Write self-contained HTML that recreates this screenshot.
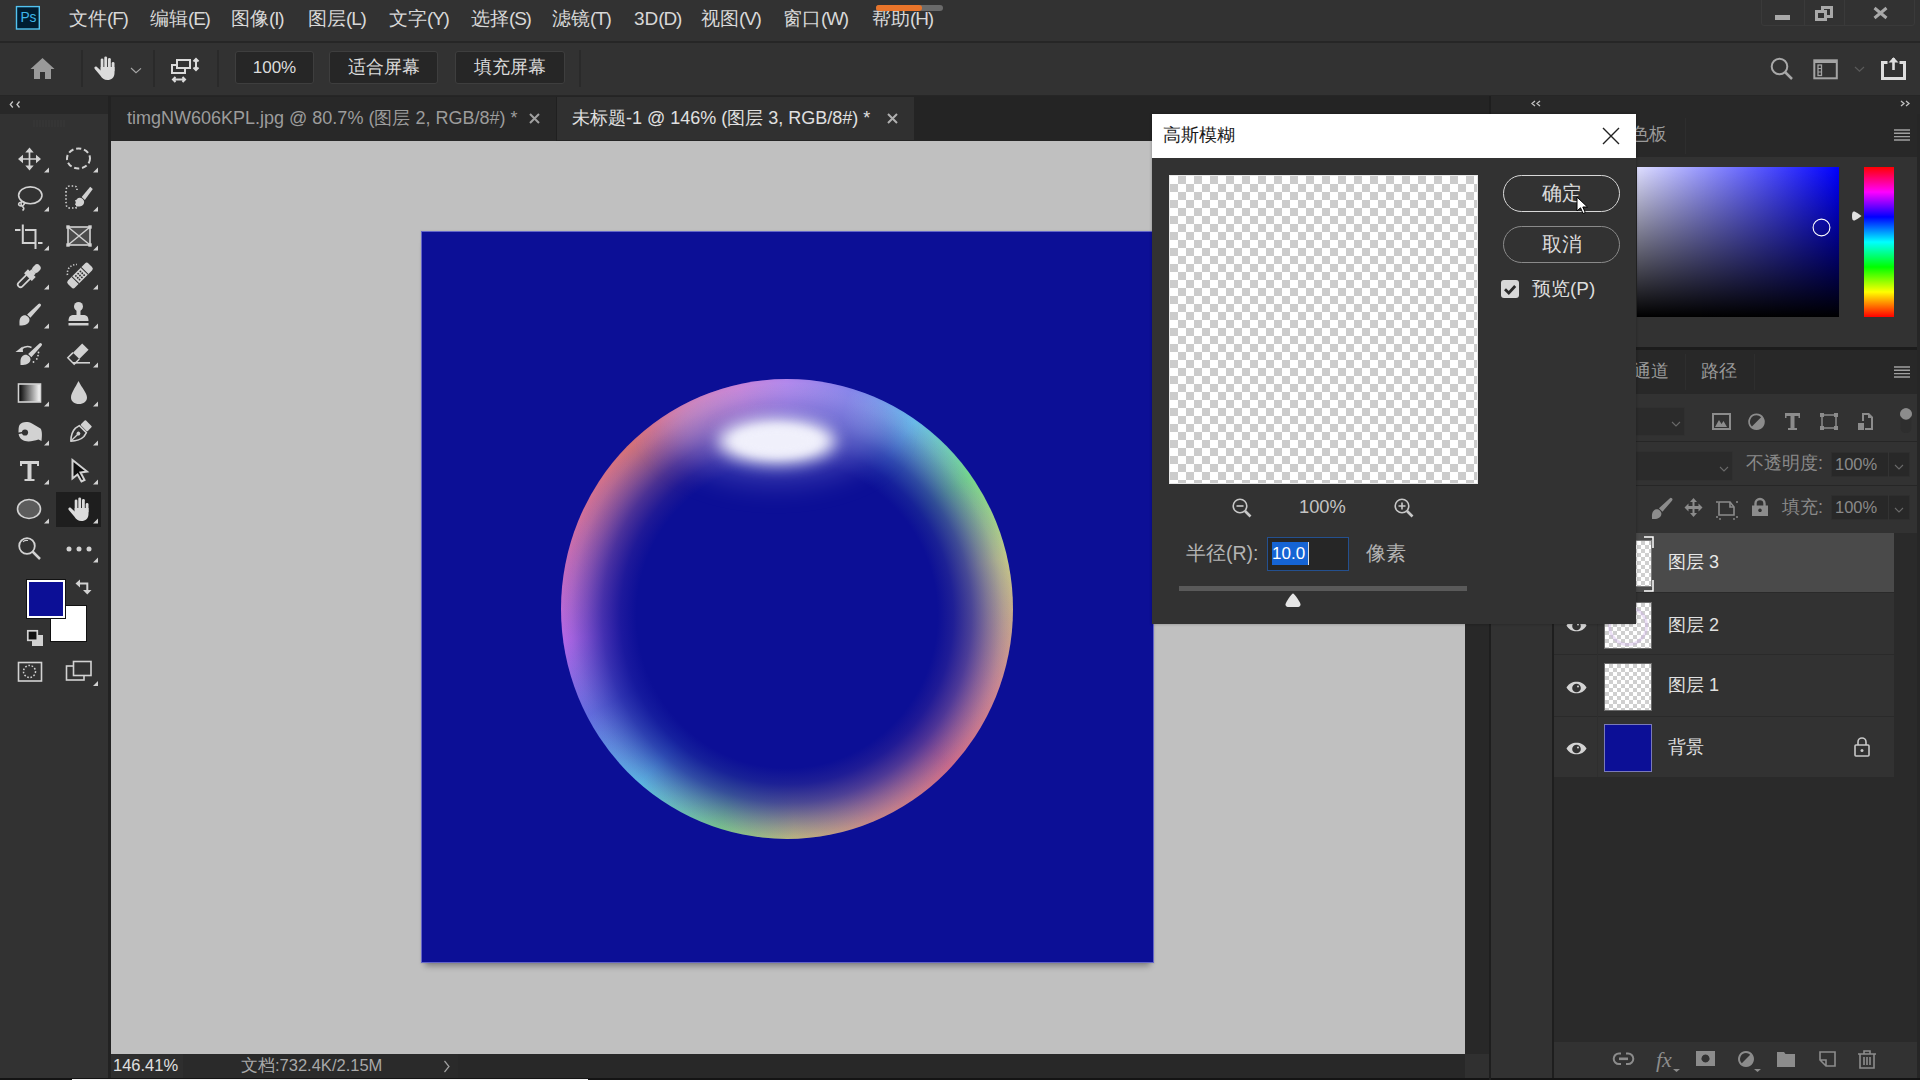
<!DOCTYPE html>
<html><head><meta charset="utf-8">
<style>
*{margin:0;padding:0;box-sizing:border-box}
html,body{width:1920px;height:1080px;overflow:hidden;background:#323232;font-family:"Liberation Sans",sans-serif;color:#d4d4d4}
.a{position:absolute}
svg{position:absolute;overflow:visible}
</style></head><body>

<!-- MENU BAR -->
<div class="a" id="menubar" style="left:0;top:0;width:1920px;height:41px;background:#323232"></div>
<div class="a" style="left:0;top:41px;width:1920px;height:2px;background:#262626"></div>


<!-- PS logo -->
<svg style="left:0;top:0" width="60" height="40"><rect x="16.5" y="6.6" width="22.8" height="22.4" fill="#001c30" stroke="#52c2f0" stroke-width="1.4"/><text x="20.6" y="22.2" font-family="Liberation Sans" font-size="13.8" fill="#3db6ea" letter-spacing="-0.3">Ps</text></svg>
<div class="a" id="menus" style="left:0;top:0;height:41px;font-size:19px;line-height:37px;color:#d8d8d8;white-space:nowrap">
<span class="a" style="left:69px">文件<i style="font-style:normal;letter-spacing:-1.2px">(F)</i></span>
<span class="a" style="left:150px">编辑<i style="font-style:normal;letter-spacing:-1.2px">(E)</i></span>
<span class="a" style="left:231px">图像<i style="font-style:normal;letter-spacing:-1.2px">(I)</i></span>
<span class="a" style="left:308px">图层<i style="font-style:normal;letter-spacing:-1.2px">(L)</i></span>
<span class="a" style="left:389px">文字<i style="font-style:normal;letter-spacing:-1.2px">(Y)</i></span>
<span class="a" style="left:471px">选择<i style="font-style:normal;letter-spacing:-1.2px">(S)</i></span>
<span class="a" style="left:552px">滤镜<i style="font-style:normal;letter-spacing:-1.2px">(T)</i></span>
<span class="a" style="left:634px">3D<i style="font-style:normal;letter-spacing:-1.2px">(D)</i></span>
<span class="a" style="left:701px">视图<i style="font-style:normal;letter-spacing:-1.2px">(V)</i></span>
<span class="a" style="left:783px">窗口<i style="font-style:normal;letter-spacing:-1.2px">(W)</i></span>
<span class="a" style="left:872px">帮助<i style="font-style:normal;letter-spacing:-1.2px">(H)</i></span>
</div>
<div class="a" style="left:876px;top:5px;width:67px;height:6px;border-radius:3px;background:#6a6a6a"></div>
<div class="a" style="left:876px;top:5px;width:46px;height:6px;border-radius:3px;background:#e8742a"></div>
<!-- window controls -->
<div class="a" style="left:1761px;top:-3px;width:154px;height:29px;border:1px solid #3a3a3a;border-radius:3px"></div>
<div class="a" style="left:1804px;top:0;width:1px;height:25px;background:#3a3a3a"></div>
<div class="a" style="left:1844px;top:0;width:1px;height:25px;background:#3a3a3a"></div>
<div class="a" style="left:1775px;top:15px;width:15px;height:5px;background:#a8a8a8"></div>
<div class="a" style="left:1821px;top:6px;width:12px;height:12px;border:3px solid #a8a8a8"></div>
<div class="a" style="left:1815px;top:10px;width:12px;height:11px;border:3px solid #a8a8a8;background:#323232"></div>
<svg style="left:1873px;top:7px" width="15" height="12"><path d="M1.5 1 L13.5 11 M13.5 1 L1.5 11" stroke="#a8a8a8" stroke-width="3"/></svg>

<!-- OPTIONS BAR -->
<div class="a" id="optbar" style="left:0;top:43px;width:1920px;height:52px;background:#323232"></div>
<div class="a" style="left:0;top:95px;width:1920px;height:1px;background:#262626"></div>


<!-- options bar content -->
<svg style="left:30px;top:57px" width="25" height="23"><path d="M12.5 1 L0.5 12 H4 V22 H10 V15 H15 V22 H21 V12 H24.5 Z" fill="#9a9a9a"/></svg>
<div class="a" style="left:81px;top:50px;width:2px;height:37px;background:#2a2a2a"></div>
<div class="a" style="left:153px;top:50px;width:2px;height:37px;background:#2a2a2a"></div>
<div class="a" style="left:217px;top:50px;width:2px;height:37px;background:#2a2a2a"></div>
<div class="a" style="left:579px;top:50px;width:2px;height:37px;background:#2a2a2a"></div>
<svg style="left:88px;top:52px" width="30" height="30"><g fill="#dcdcdc"><rect x="12.7" y="6.5" width="2.7" height="12" rx="1.35"/><rect x="16.3" y="4.4" width="2.8" height="14" rx="1.4"/><rect x="20" y="5.9" width="2.8" height="12" rx="1.4"/><rect x="23.7" y="10" width="2.8" height="10" rx="1.4"/><path d="M12.7 15 H26.5 V21 C26.5 25.5 23.5 28 19.5 28 C16 28 14 26.2 12.5 23.8 L6.8 17 C5.6 15.5 7.2 13.8 8.7 14.8 L12.7 18.5 Z"/></g></svg>
<svg style="left:130px;top:67px" width="12" height="7"><path d="M1 1 L6 5.7 L11 1.3" stroke="#a8a8a8" stroke-width="1.1" fill="none"/></svg>
<svg style="left:171px;top:57px" width="28" height="25"><g stroke="#dadada" stroke-width="2" fill="none"><rect x="1" y="8" width="13" height="8"/><rect x="6" y="3" width="13" height="8" fill="#323232"/><path d="M25 2 V13 M22.5 4.5 L25 2 L27.5 4.5 M22.5 10.5 L25 13 L27.5 10.5 M2 22.5 H14 M4.5 20 L2 22.5 L4.5 25 M11.5 20 L14 22.5 L11.5 25"/></g></svg>
<div class="a" style="left:235px;top:51px;width:79px;height:33px;border:1px solid #3e3e3e;border-radius:3px;background:#262626;color:#dcdcdc;font-size:17px;line-height:31px;text-align:center">100%</div>
<div class="a" style="left:329px;top:51px;width:109px;height:33px;border:1px solid #3e3e3e;border-radius:3px;background:#262626;color:#dcdcdc;font-size:18px;line-height:31px;text-align:center">适合屏幕</div>
<div class="a" style="left:455px;top:51px;width:110px;height:33px;border:1px solid #3e3e3e;border-radius:3px;background:#262626;color:#dcdcdc;font-size:18px;line-height:31px;text-align:center">填充屏幕</div>
<!-- right options -->
<svg style="left:1770px;top:57px" width="24" height="24"><circle cx="9.5" cy="9.5" r="7.8" stroke="#a8a8a8" stroke-width="2" fill="none"/><path d="M15 15 L22 22" stroke="#a8a8a8" stroke-width="2.5"/></svg>
<svg style="left:1813px;top:59px" width="26" height="21"><rect x="1.3" y="1.3" width="22.5" height="18" stroke="#a4a4a4" stroke-width="2" fill="none"/><path d="M1.3 2.5 H23.8" stroke="#a4a4a4" stroke-width="3"/><rect x="5" y="6" width="3.5" height="10.5" stroke="#a4a4a4" stroke-width="1.3" fill="none"/><path d="M5 9.5 H8.5 M5 13 H8.5" stroke="#a4a4a4" stroke-width="1.2"/></svg>
<svg style="left:1854px;top:66px" width="11" height="7"><path d="M1 1 L5.5 5.2 L10 1" stroke="#5a5a5a" stroke-width="1.2" fill="none"/></svg>
<svg style="left:1880px;top:54px" width="27" height="27"><path d="M13.5 4 V16" stroke="#dedede" stroke-width="2.6"/><path d="M8.5 8.5 L13.5 3.2 L18.5 8.5 Z" fill="#dedede"/><path d="M7.5 8.5 H2.5 V24.5 H24.5 V8.5 H19.5" stroke="#dedede" stroke-width="3" fill="none"/></svg>

<!-- TOOLBAR -->
<div class="a" style="left:0;top:96px;width:108px;height:18px;background:#282828"></div>
<div class="a" style="left:0;top:114px;width:108px;height:966px;background:#323232"></div>
<div class="a" style="left:108px;top:96px;width:3px;height:984px;background:#222222"></div>


<!-- toolbar content -->
<svg style="left:0;top:0" width="108" height="1080">
<g fill="none" stroke="#c8c8c8" stroke-width="1.3"><path d="M12.8 101.5 L10.3 104.5 L12.8 107.5 M19.5 101.5 L17 104.5 L19.5 107.5"/></g>
<g stroke="#383838" stroke-width="1"><path d="M34 120 V127 M37 120 V127 M40 120 V127 M43 120 V127 M46 120 V127 M49 120 V127 M52 120 V127 M55 120 V127 M58 120 V127 M61 120 V127 M64 120 V127"/></g>
<g fill="#d2d2d2"><path d="M44 172.5 H49 V167.5 Z"/><path d="M93 172.5 H98 V167.5 Z"/><path d="M44 211.5 H49 V206.5 Z"/><path d="M93 211.5 H98 V206.5 Z"/><path d="M44 250.5 H49 V245.5 Z"/><path d="M93 250.5 H98 V245.5 Z"/><path d="M44 289.5 H49 V284.5 Z"/><path d="M93 289.5 H98 V284.5 Z"/><path d="M44 328.5 H49 V323.5 Z"/><path d="M93 328.5 H98 V323.5 Z"/><path d="M44 367.5 H49 V362.5 Z"/><path d="M93 367.5 H98 V362.5 Z"/><path d="M44 406.5 H49 V401.5 Z"/><path d="M93 406.5 H98 V401.5 Z"/><path d="M44 445.5 H49 V440.5 Z"/><path d="M93 445.5 H98 V440.5 Z"/><path d="M44 484.5 H49 V479.5 Z"/><path d="M93 484.5 H98 V479.5 Z"/><path d="M44 523.5 H49 V518.5 Z"/><path d="M93 523.5 H98 V518.5 Z"/><path d="M93 562.5 H98 V557.5 Z"/><path d="M93 686 H98 V681 Z"/></g>
<!-- move -->
<path d="M29.5 151 V167 M21.5 159 H37.5" stroke="#d2d2d2" stroke-width="1.7"/>
<path fill="#d2d2d2" d="M29.5 147.5 L25.3 152.5 H33.7 Z M29.5 170.5 L25.3 165.5 H33.7 Z M18 159 L23 154.8 V163.2 Z M41 159 L36 154.8 V163.2 Z"/>
<!-- ellipse marquee -->
<ellipse cx="78.5" cy="158.5" rx="11.5" ry="10" fill="none" stroke="#d2d2d2" stroke-width="2" stroke-dasharray="5.2 2.8"/>
<!-- lasso -->
<g fill="none" stroke="#d2d2d2" stroke-width="1.6">
<ellipse cx="30.3" cy="195.3" rx="11.7" ry="8.4"/>
<path d="M22 202.5 C18 201.5 17.5 206 21 206 C24 206 25.5 203 23 201.8 C21 201 20 204.5 22.5 206.5 C24.5 208 24 209.5 22.5 210.5"/>
</g>
<!-- quick selection -->
<g fill="none" stroke="#d2d2d2" stroke-width="1.6" stroke-dasharray="1.5 2"><path d="M76 200 V208 H70 C66 208 66 205 66 200 V192 C66 188 67 186 70 186 H74 C77 186 77 188 77 190"/></g>
<g transform="translate(76 206.5) rotate(-48) scale(0.82)" fill="#d2d2d2"><path d="M0 0 C1.5 -1 3.5 -5.2 7.5 -5.2 C10.5 -5.2 12.2 -2.8 12.2 0 C12.2 2.8 10.3 5 7.5 5 C3.5 5 1.5 1 0 0 Z"/><path d="M13.2 -2.6 L29.5 -3.2 L29.5 1 L13.2 2.6 Z"/></g>
<!-- crop -->
<g fill="none" stroke="#d2d2d2" stroke-width="2"><path d="M15 230 H20.5 M22.8 224.5 V243 H35.5 M25 230 H35.5 V249 M38 243 H42.5"/></g>
<!-- frame -->
<rect x="68" y="227" width="22" height="18" fill="#4c4c4c" stroke="#d2d2d2" stroke-width="1.6"/>
<path d="M68 227 L90 245 M90 227 L68 245" stroke="#d2d2d2" stroke-width="1.5"/>
<g fill="#d2d2d2"><rect x="66.3" y="225.3" width="3.4" height="3.4"/><rect x="88.3" y="225.3" width="3.4" height="3.4"/><rect x="66.3" y="243.3" width="3.4" height="3.4"/><rect x="88.3" y="243.3" width="3.4" height="3.4"/></g>
<!-- eyedropper -->
<g transform="translate(29 276) rotate(-45)" fill="#d2d2d2">
<path d="M-1 -2.7 H-12 A2.7 2.7 0 0 0 -12 2.7 H-1" fill="none" stroke="#d2d2d2" stroke-width="1.7"/>
<rect x="-1.5" y="-5.5" width="5.5" height="11"/><rect x="3.5" y="-3" width="3" height="6"/><rect x="6" y="-3.6" width="9" height="7.2" rx="3.6"/>
</g>
<!-- healing -->
<g transform="translate(80 275.5) rotate(-45)"><rect x="-14.5" y="-5" width="29" height="10" rx="2.5" fill="#d2d2d2"/><path d="M-6.5 -5 V5 M6.5 -5 V5" stroke="#323232" stroke-width="1"/><g fill="#323232"><circle cx="-3.2" cy="-2.6" r="0.95"/><circle cx="0" cy="-2.6" r="0.95"/><circle cx="3.2" cy="-2.6" r="0.95"/><circle cx="-3.2" cy="0" r="0.95"/><circle cx="0" cy="0" r="0.95"/><circle cx="3.2" cy="0" r="0.95"/><circle cx="-3.2" cy="2.6" r="0.95"/><circle cx="0" cy="2.6" r="0.95"/><circle cx="3.2" cy="2.6" r="0.95"/></g></g>
<path d="M67.5 275 C66.5 269 70.5 264.5 77 264.5" fill="none" stroke="#d2d2d2" stroke-width="1.6" stroke-dasharray="1.3 1.8"/>
<!-- brush -->
<g transform="translate(19.5 325.5) rotate(-45.5)" fill="#d2d2d2"><path d="M0 0 C1.5 -1 3.5 -4.8 7.5 -4.8 C10.5 -4.8 12.2 -2.8 12.2 0 C12.2 2.8 10.3 4.6 7.5 4.6 C3.5 4.6 1.5 1 0 0 Z"/><path d="M13.2 -2.3 L28.5 -1.5 A1.5 1.5 0 0 1 28.5 1.5 L13.2 2.3 Z"/></g>
<!-- stamp -->
<circle cx="78.5" cy="306.5" r="4.5" fill="#d2d2d2"/><rect x="76.5" y="309" width="4" height="7" fill="#d2d2d2"/><path d="M68.5 321 C68.5 316.5 70.5 315 74 315 H83 C86.5 315 88.5 316.5 88.5 321 Z" fill="#d2d2d2"/><rect x="68.5" y="323" width="20" height="2.5" fill="#d2d2d2"/>
<!-- history brush -->
<g transform="translate(20.5 365) rotate(-45.5)" fill="#d2d2d2"><path d="M0 0 C1.5 -1 3.5 -4.8 7.5 -4.8 C10.5 -4.8 12.2 -2.8 12.2 0 C12.2 2.8 10.3 4.6 7.5 4.6 C3.5 4.6 1.5 1 0 0 Z"/><path d="M13.2 -2.3 L28.5 -1.5 A1.5 1.5 0 0 1 28.5 1.5 L13.2 2.3 Z"/></g>
<path d="M15.5 352 L22.5 346.5 L23 352 Z" fill="#d2d2d2"/><path d="M21 349.5 C24 346.5 28 346 31.5 347.5" fill="none" stroke="#d2d2d2" stroke-width="1.5"/>
<g fill="#d2d2d2"><circle cx="38.5" cy="352.5" r="0.9"/><circle cx="38" cy="355.6" r="0.9"/><circle cx="36.8" cy="358.9" r="0.9"/><circle cx="33.5" cy="362" r="0.9"/></g>
<!-- eraser -->
<g transform="translate(79 353) rotate(-45)"><rect x="-4" y="-4.5" width="13" height="9" fill="#d2d2d2"/><path d="M-4 -4.5 H-11.3 V4.5 H-4" fill="none" stroke="#d2d2d2" stroke-width="1.5"/></g>
<path d="M73 362.8 H90" stroke="#d2d2d2" stroke-width="1.6"/>
<!-- gradient -->
<defs><linearGradient id="grd" x1="0" x2="1"><stop offset="0" stop-color="#000"/><stop offset="1" stop-color="#fff"/></linearGradient></defs>
<rect x="18.5" y="384" width="22" height="18" fill="url(#grd)" stroke="#d2d2d2" stroke-width="1.6"/>
<!-- drop -->
<path d="M78.5 381 C82 388 87 393 87 397.5 C87 401.5 83.5 404 79 404 C74.5 404 71 401.5 71 397.5 C71 393 75 388 78.5 381 Z" fill="#d2d2d2"/>
<!-- dodge blob -->
<path d="M19.5 425 C21.5 422 27 421 32 423.5 L40.5 428.5 C42.5 431 42 437 41.5 441 L38.5 439.5 C34 441 29 442 25 441 C21 440 18.5 436.5 18.5 432.5 C18.5 429 18.5 427 19.5 425 Z" fill="#d2d2d2"/><circle cx="25" cy="432.5" r="3.1" fill="#323232"/><path d="M17.5 433.5 L23 432.5" stroke="#323232" stroke-width="1.6"/>
<!-- pen -->
<g transform="translate(70.5 441.5) rotate(-45)"><path d="M0.5 0 C4 -3.5 8.5 -6 13 -6 L17.5 -5 V5 L13 6 C8.5 6 4 3.5 0.5 0 Z" fill="none" stroke="#d2d2d2" stroke-width="1.6" stroke-linejoin="round"/><path d="M1 0 H10" stroke="#d2d2d2" stroke-width="1.3"/><circle cx="11.2" cy="0" r="1.9" fill="#d2d2d2"/><rect x="18.8" y="-4.8" width="7" height="9.6" rx="1" fill="#d2d2d2"/></g>
<!-- type -->
<path d="M20 461 H39 V466 H37 V464 H31.5 V479 H34.5 V481 H24.5 V479 H27.5 V464 H22 V466 H20 Z" fill="#d2d2d2"/>
<!-- path select arrow -->
<path d="M72.5 460 L87 471.5 L80.5 472.5 L84.5 480 L81.5 481.5 L77.5 474.5 L72.5 478.5 Z" fill="#0e0e0e" stroke="#d2d2d2" stroke-width="2" stroke-linejoin="miter"/>
<!-- ellipse shape -->
<ellipse cx="29" cy="509" rx="11.5" ry="9.5" fill="#5c5c5c" stroke="#d2d2d2" stroke-width="1.6"/>
<!-- zoom -->
<circle cx="27" cy="546" r="7.8" fill="none" stroke="#d2d2d2" stroke-width="1.8"/><path d="M32.5 551.5 L40 559" stroke="#d2d2d2" stroke-width="2.5"/><path d="M23 542 C24 540.5 26 540 28 540.5" fill="none" stroke="#d2d2d2" stroke-width="1.2"/>
<!-- more -->
<g fill="#d2d2d2"><circle cx="69" cy="549" r="2.5"/><circle cx="79" cy="549" r="2.5"/><circle cx="89" cy="549" r="2.5"/></g>
<!-- swap -->
<path d="M79 583.5 H87.3 V590.5" fill="none" stroke="#d2d2d2" stroke-width="2"/><path d="M80 579.5 L75.5 583.5 L80 587.5 Z M83 590 H91.5 L87.3 594.5 Z" fill="#d2d2d2"/>
<!-- default colors -->
<rect x="32" y="635" width="11" height="11" fill="#d2d2d2"/><rect x="27.8" y="630.8" width="9.5" height="9.5" fill="#111" stroke="#d2d2d2" stroke-width="1.7"/>
<!-- quick mask -->
<rect x="18.5" y="662.5" width="23" height="18.5" fill="none" stroke="#d2d2d2" stroke-width="1.6"/><circle cx="29.5" cy="671.5" r="6" fill="none" stroke="#d2d2d2" stroke-width="1.5" stroke-dasharray="1.6 1.7"/>
<!-- screen mode -->
<rect x="66.5" y="666" width="17.5" height="14" fill="none" stroke="#d2d2d2" stroke-width="1.6"/><rect x="73.5" y="661.5" width="17.5" height="14" fill="#323232" stroke="#d2d2d2" stroke-width="1.6"/>
</svg>
<div class="a" style="left:56px;top:492px;width:45px;height:35px;background:#1e1e1e"></div>
<svg style="left:61.5px;top:493px" width="30" height="30"><g fill="#dcdcdc"><rect x="12.7" y="6.5" width="2.7" height="12" rx="1.35"/><rect x="16.3" y="4.4" width="2.8" height="14" rx="1.4"/><rect x="20" y="5.9" width="2.8" height="12" rx="1.4"/><rect x="23.7" y="10" width="2.8" height="10" rx="1.4"/><path d="M12.7 15 H26.5 V21 C26.5 25.5 23.5 28 19.5 28 C16 28 14 26.2 12.5 23.8 L6.8 17 C5.6 15.5 7.2 13.8 8.7 14.8 L12.7 18.5 Z"/></g></svg>
<svg style="left:0;top:0" width="108" height="1080"><path d="M93 523.5 H98 V518.5 Z" fill="#d2d2d2"/></svg>
<!-- colors -->
<div class="a" style="left:50px;top:605px;width:37px;height:37px;background:#fff;border:1px solid #111"></div>
<div class="a" style="left:27px;top:580px;width:38px;height:38px;background:#0c0f96;border:2px solid #fff;outline:1px solid #111"></div>
<!-- TAB BAR -->
<div class="a" style="left:111px;top:96px;width:1380px;height:45px;background:#242424"></div>
<div class="a" style="left:111px;top:97px;width:445px;height:44px;background:#282828"></div>
<div class="a" style="left:556px;top:97px;width:1px;height:44px;background:#202020"></div>
<div class="a" style="left:557px;top:97px;width:357px;height:43px;background:#303030"></div>


<!-- tabs content -->
<div class="a" id="t1" style="left:127px;top:97px;height:44px;line-height:43px;font-size:18px;color:#9c9c9c;white-space:nowrap">timgNW606KPL.jpg @ 80.7% (图层 2, RGB/8#) *</div>
<svg style="left:529px;top:113px" width="11" height="11"><path d="M1 1 L10 10 M10 1 L1 10" stroke="#a0a0a0" stroke-width="2"/></svg>
<div class="a" id="t2" style="left:572px;top:97px;height:44px;line-height:43px;font-size:18px;color:#e0e0e0;white-space:nowrap">未标题-1 @ 146% (图层 3, RGB/8#) *</div>
<svg style="left:887px;top:113px" width="11" height="11"><path d="M1 1 L10 10 M10 1 L1 10" stroke="#b0b0b0" stroke-width="2"/></svg>

<!-- CANVAS -->
<div class="a" style="left:111px;top:141px;width:1354px;height:913px;background:#c0c0c0"></div>
<div class="a" style="left:421px;top:231px;width:733px;height:732px;background:#0c0f96;box-shadow:inset 0 0 0 1px rgba(160,160,235,0.6), 0 7px 6px -4px rgba(0,0,0,0.33), 0 0 1px 1px rgba(0,0,0,0.04)"></div>


<!-- bubble -->
<div class="a" style="left:561px;top:379px;width:452px;height:460px;border-radius:50%;overflow:hidden">
  <div class="a" style="left:0;top:0;width:452px;height:460px;background:conic-gradient(from 0deg, #a874e6 0deg, #7474e4 16deg, #68b8e8 34deg, #74d48c 54deg, #c4c888 77deg, #d89090 110deg, #de7488 134deg, #d89488 158deg, #cec47e 178deg, #84d48c 197deg, #64c4e8 220deg, #6a74e4 242deg, #ba6aea 262deg, #d0709c 294deg, #d27078 316deg, #c470cc 348deg, #a874e6 360deg)"></div>
  <div class="a" style="left:0;top:0;width:452px;height:460px;background:radial-gradient(closest-side, rgba(255,255,255,0) 66%, rgba(210,210,255,0.12) 84%, rgba(255,255,255,0.06) 95%, rgba(255,255,255,0) 100%)"></div>
  <div class="a" style="left:0;top:0;width:452px;height:460px;background:radial-gradient(228px 232px at 226px 236px, #0c0f96 0%, #0c0f96 66%, rgba(12,15,150,0.9) 73%, rgba(12,15,150,0.68) 81%, rgba(12,15,150,0.4) 88%, rgba(12,15,150,0.15) 95%, rgba(12,15,150,0) 100%)"></div>
  <div class="a" style="left:105px;top:-10px;width:220px;height:110px;border-radius:50%;background:rgba(205,195,255,0.30);filter:blur(16px)"></div>
</div>
<div class="a" style="left:718px;top:418px;width:118px;height:46px;border-radius:50%;background:#eeeefa;filter:blur(8px)"></div>
<div class="a" style="left:734px;top:426px;width:86px;height:30px;border-radius:50%;background:#f0f0fb;filter:blur(5px)"></div>
<!-- STATUS BAR -->
<div class="a" style="left:111px;top:1054px;width:1354px;height:24px;background:#282828"></div>
<div class="a" style="left:0;top:1078px;width:1920px;height:2px;background:#141414"></div><div class="a" style="left:72px;top:1079px;width:516px;height:1px;background:#f4f4f4"></div>


<div class="a" style="left:111px;top:1054px;width:72px;height:24px;background:#2e2e2e"></div>
<div class="a" style="left:183px;top:1054px;width:275px;height:24px;background:#2a2a2a"></div>
<div class="a" id="s1" style="left:113px;top:1053px;height:25px;line-height:25px;font-size:16.5px;color:#e0e0e0;white-space:nowrap">146.41%</div>
<div class="a" id="s2" style="left:241px;top:1053px;height:25px;line-height:25px;font-size:16.5px;color:#a8a8a8;white-space:nowrap">文档:732.4K/2.15M</div>
<svg style="left:443px;top:1060px" width="8" height="13"><path d="M1.5 1 L6 6.5 L1.5 12" stroke="#a0a0a0" stroke-width="1.2" fill="none"/></svg>

<!-- SCROLL COLUMN -->
<div class="a" style="left:1465px;top:141px;width:24px;height:937px;background:#282828"></div>
<div class="a" style="left:1465px;top:1054px;width:24px;height:24px;background:#303030"></div>
<div class="a" style="left:1489px;top:96px;width:2px;height:984px;background:#1e1e1e"></div>

<!-- DOCK COLUMN -->
<div class="a" style="left:1491px;top:96px;width:429px;height:18px;background:#282828"></div>
<div class="a" style="left:1491px;top:114px;width:61px;height:964px;background:#323232"></div>
<div class="a" style="left:1552px;top:114px;width:2px;height:964px;background:#1e1e1e"></div>

<!-- RIGHT PANELS -->
<svg style="left:0;top:0" width="1920" height="1080">
<g fill="none" stroke="#c0c0c0" stroke-width="1.3"><path d="M1535 101 L1532 103.5 L1535 106 M1540 101 L1537 103.5 L1540 106"/><path d="M1901 101 L1904 103.5 L1901 106 M1906 101 L1909 103.5 L1906 106"/></g>
</svg>
<!-- color panel -->
<div class="a" style="left:1554px;top:114px;width:363px;height:43px;background:#282828"></div>
<div class="a" style="left:1554px;top:157px;width:363px;height:190px;background:#323232"></div>
<div class="a" style="left:1685px;top:118px;width:1px;height:36px;background:#2e2e2e"></div>
<div class="a" style="left:1631px;top:114px;height:43px;line-height:41px;font-size:18px;color:#9a9a9a;white-space:nowrap">色板</div>
<svg style="left:1894px;top:129px" width="16" height="12"><path d="M0 1 H16 M0 4.3 H16 M0 7.6 H16 M0 11 H16" stroke="#a0a0a0" stroke-width="1.4"/></svg>
<div class="a" style="left:1608px;top:167px;width:231px;height:150px;background:linear-gradient(to bottom, rgba(0,0,0,0), #000), linear-gradient(to right, #fff, #0000ff)"></div>
<div class="a" style="left:1636px;top:167px;width:1px;height:150px;background:#262626"></div>
<svg style="left:1810px;top:216px" width="23" height="23"><circle cx="11.5" cy="11.5" r="8.4" stroke="#fff" stroke-width="1.1" fill="none"/></svg>
<div class="a" style="left:1864px;top:167px;width:30px;height:150px;background:linear-gradient(to bottom, #ff0000 0%, #ff00ff 16.7%, #0000ff 33.3%, #00ffff 50%, #00ff00 66.7%, #ffff00 83.3%, #ff0000 100%)"></div>
<svg style="left:1850px;top:209px" width="14" height="14"><path d="M4 2.5 C2.5 2.5 2 4 2 7 C2 10 2.5 11.5 4 11.5 C5.5 11.5 9 9 11.5 7 C9 5 5.5 2.5 4 2.5 Z" fill="#e0e0e0"/></svg>
<div class="a" style="left:1554px;top:347px;width:366px;height:3px;background:#1c1c1c"></div>
<div class="a" style="left:1917px;top:114px;width:3px;height:964px;background:#262626"></div>
<!-- layers panel -->
<div class="a" style="left:1554px;top:350px;width:363px;height:44px;background:#282828"></div>
<div class="a" style="left:1685px;top:354px;width:1px;height:36px;background:#2e2e2e"></div>
<div class="a" style="left:1754px;top:354px;width:1px;height:36px;background:#2e2e2e"></div>
<div class="a" style="left:1633px;top:350px;height:44px;line-height:42px;font-size:18px;color:#9a9a9a;white-space:nowrap">通道</div>
<div class="a" style="left:1701px;top:350px;height:44px;line-height:42px;font-size:18px;color:#999;white-space:nowrap">路径</div>
<svg style="left:1894px;top:366px" width="16" height="12"><path d="M0 1 H16 M0 4.3 H16 M0 7.6 H16 M0 11 H16" stroke="#a0a0a0" stroke-width="1.4"/></svg>
<div class="a" style="left:1554px;top:394px;width:363px;height:47px;background:#323232"></div>
<div class="a" style="left:1570px;top:407px;width:115px;height:29px;background:#2b2b2b;border:1px solid #303030"></div>
<svg style="left:1671px;top:421px" width="10" height="6"><path d="M1 1 L5 5 L9 1" stroke="#6a6a6a" stroke-width="1.1" fill="none"/></svg>
<svg style="left:0;top:0" width="1920" height="1080">
<g fill="#8c8c8c" stroke="none">
<path d="M1712 413 H1731 V430 H1712 Z M1714 415 V428 H1729 V415 Z"/><path d="M1715 427 L1719 420 L1721.5 424 L1723.5 421 L1727 427 Z"/>
<path d="M1756.5 413.5 a8.3 8.3 0 1 0 0.01 0 Z M1756.5 415.3 a6.5 6.5 0 0 0 -4.6 11.1 L1761.1 417.2 A6.5 6.5 0 0 0 1756.5 415.3 Z" fill-rule="evenodd"/>
<path d="M1785 413 H1800 V418 H1798.5 V416 H1794.5 V428 H1797 V430 H1788 V428 H1790.5 V416 H1786.5 V418 H1785 Z"/>
<path d="M1858 423 H1864 V430 H1858 Z"/><path d="M1862 413 H1869 L1873 417 V430 H1865 V428 H1871 V418 H1868 V415 H1864 V421 H1862 Z"/>
<circle cx="1906" cy="414" r="5.8"/>
</g>
<g fill="none" stroke="#8c8c8c" stroke-width="1.5"><rect x="1822" y="415" width="14" height="13"/></g>
<g fill="#8c8c8c"><rect x="1820" y="413" width="4" height="4"/><rect x="1834" y="413" width="4" height="4"/><rect x="1820" y="426" width="4" height="4"/><rect x="1834" y="426" width="4" height="4"/></g>
<rect x="1900.5" y="414" width="11" height="19" rx="5.5" fill="#2e2e2e"/><circle cx="1906" cy="414" r="5.8" fill="#8c8c8c"/>
</svg>
<div class="a" style="left:1554px;top:441px;width:363px;height:1px;background:#262626"></div>
<div class="a" style="left:1554px;top:442px;width:363px;height:43px;background:#323232"></div>
<div class="a" style="left:1570px;top:451px;width:163px;height:30px;background:#2b2b2b;border:1px solid #303030"></div>
<svg style="left:1719px;top:466px" width="10" height="6"><path d="M1 1 L5 5 L9 1" stroke="#6a6a6a" stroke-width="1.1" fill="none"/></svg>
<div class="a" id="opl" style="left:1746px;top:442px;height:43px;line-height:43px;font-size:18px;color:#8a8a8a;white-space:nowrap">不透明度:</div>
<div class="a" style="left:1831px;top:452px;width:79px;height:25px;background:#282828;border:1px solid #2e2e2e"></div>
<div class="a" style="left:1888px;top:452px;width:1px;height:25px;background:#333"></div>
<div class="a" id="opv" style="left:1835px;top:452px;height:25px;line-height:25px;font-size:16.5px;color:#8a8a8a;white-space:nowrap">100%</div>
<svg style="left:1894px;top:464px" width="10" height="6"><path d="M1 1 L5 5 L9 1" stroke="#6a6a6a" stroke-width="1.1" fill="none"/></svg>
<div class="a" style="left:1554px;top:485px;width:363px;height:1px;background:#262626"></div>
<div class="a" style="left:1554px;top:486px;width:363px;height:47px;background:#323232"></div>
<svg style="left:0;top:0" width="1920" height="1080">
<g fill="#8c8c8c">
<g transform="translate(1652 519) rotate(-46) scale(0.95)" fill="#8c8c8c"><path d="M0 0 C1.5 -1 3.5 -4.8 7.5 -4.8 C10.5 -4.8 12.2 -2.8 12.2 0 C12.2 2.8 10.3 4.6 7.5 4.6 C3.5 4.6 1.5 1 0 0 Z"/><path d="M13.2 -2.6 L28.5 -1.7 A1.7 1.7 0 0 1 28.5 1.7 L13.2 2.6 Z"/></g>
<path d="M1693.5 498 L1690 502 H1692.5 V506 H1688.5 V503.5 L1684.5 507.5 L1688.5 511.5 V509 H1692.5 V513 H1690 L1693.5 517 L1697 513 H1694.5 V509 H1698.5 V511.5 L1702.5 507.5 L1698.5 503.5 V506 H1694.5 V502 H1697 Z"/>
<path d="M1752 505.5 H1768 V516 H1752 Z M1760 508.5 a1.8 1.8 0 1 0 0.01 0 Z" fill-rule="evenodd"/>
</g>
<path d="M1755.5 506 V503.5 a4.5 4.5 0 0 1 9 0 V506" fill="none" stroke="#8c8c8c" stroke-width="2.4"/>
<g fill="none" stroke="#8c8c8c" stroke-width="1.6"><path d="M1719 502 V515 H1734 V507 L1730 502 Z"/><path d="M1730 502 V507 H1734" /></g>
<g fill="#8c8c8c"><circle cx="1717" cy="502" r="1"/><circle cx="1737" cy="502" r="1"/><circle cx="1717" cy="517" r="1"/><circle cx="1737" cy="517" r="1"/><circle cx="1720" cy="519" r="0.9"/><circle cx="1734" cy="519" r="0.9"/></g>
</svg>
<div class="a" id="fll" style="left:1782px;top:486px;height:43px;line-height:43px;font-size:18px;color:#8a8a8a;white-space:nowrap">填充:</div>
<div class="a" style="left:1831px;top:495px;width:79px;height:25px;background:#282828;border:1px solid #2e2e2e"></div>
<div class="a" style="left:1888px;top:495px;width:1px;height:25px;background:#333"></div>
<div class="a" style="left:1835px;top:495px;height:25px;line-height:25px;font-size:16.5px;color:#8a8a8a;white-space:nowrap">100%</div>
<svg style="left:1894px;top:507px" width="10" height="6"><path d="M1 1 L5 5 L9 1" stroke="#6a6a6a" stroke-width="1.1" fill="none"/></svg>
<!-- layers list -->
<div class="a" style="left:1554px;top:533px;width:363px;height:509px;background:#2a2a2a"></div>
<div class="a" style="left:1554px;top:533px;width:340px;height:59px;background:#4a4a4a"></div>
<div class="a" style="left:1554px;top:592px;width:340px;height:1px;background:#2a2a2a"></div>
<div class="a" style="left:1554px;top:593px;width:340px;height:61px;background:#323232"></div>
<div class="a" style="left:1554px;top:654px;width:340px;height:1px;background:#2a2a2a"></div>
<div class="a" style="left:1554px;top:655px;width:340px;height:61px;background:#323232"></div>
<div class="a" style="left:1554px;top:716px;width:340px;height:1px;background:#2a2a2a"></div>
<div class="a" style="left:1554px;top:717px;width:340px;height:60px;background:#323232"></div>
<div class="a" style="left:1597px;top:593px;width:1px;height:184px;background:#2e2e2e"></div>
<div class="a" style="left:1604px;top:540px;width:48px;height:47px;border:1px solid #7a7a7a;background:#fff;background-image:linear-gradient(45deg,#cfcfcf 25%,transparent 25%,transparent 75%,#cfcfcf 75%),linear-gradient(45deg,#cfcfcf 25%,transparent 25%,transparent 75%,#cfcfcf 75%);background-size:8px 8px;background-position:0 0,4px 4px"></div>
<svg style="left:1600px;top:536px" width="58" height="56"><path d="M44 1 H53 V12 M44 55 H53 V44" stroke="#fff" stroke-width="1.5" fill="none"/></svg>
<div class="a" style="left:1604px;top:602px;width:48px;height:47px;border:1px solid #6a6a6a;background:#fff;background-image:linear-gradient(45deg,#cfcfcf 25%,transparent 25%,transparent 75%,#cfcfcf 75%),linear-gradient(45deg,#cfcfcf 25%,transparent 25%,transparent 75%,#cfcfcf 75%);background-size:8px 8px;background-position:0 0,4px 4px"></div>
<div class="a" style="left:1608px;top:606px;width:40px;height:40px;border-radius:50%;border:3px solid rgba(200,170,230,0.35)"></div>
<div class="a" style="left:1604px;top:663px;width:48px;height:48px;border:1px solid #6a6a6a;background:#fff;background-image:linear-gradient(45deg,#cfcfcf 25%,transparent 25%,transparent 75%,#cfcfcf 75%),linear-gradient(45deg,#cfcfcf 25%,transparent 25%,transparent 75%,#cfcfcf 75%);background-size:8px 8px;background-position:0 0,4px 4px"></div>
<div class="a" style="left:1604px;top:724px;width:48px;height:48px;border:1px solid #7a7ab8;background:#0c0f96"></div>
<div class="a" style="left:1668px;top:533px;height:59px;line-height:59px;font-size:18px;color:#e8e8e8;white-space:nowrap">图层 3</div>
<div class="a" style="left:1668px;top:595px;height:61px;line-height:61px;font-size:18px;color:#e0e0e0;white-space:nowrap">图层 2</div>
<div class="a" style="left:1668px;top:655px;height:61px;line-height:61px;font-size:18px;color:#e0e0e0;white-space:nowrap">图层 1</div>
<div class="a" style="left:1668px;top:717px;height:60px;line-height:60px;font-size:18px;color:#e0e0e0;white-space:nowrap">背景</div>
<svg style="left:0;top:0" width="1920" height="1080">
<g><path d="M1566.5 625.5 C1570.5 617.7 1582.5 617.7 1586.5 625.5 C1582.5 633.3 1570.5 633.3 1566.5 625.5 Z" fill="#d4d4d4"/><circle cx="1576.5" cy="626" r="4.3" fill="#323232"/><circle cx="1578" cy="624.5" r="1" fill="#d4d4d4"/></g>
<g><path d="M1566.5 687.5 C1570.5 679.7 1582.5 679.7 1586.5 687.5 C1582.5 695.3 1570.5 695.3 1566.5 687.5 Z" fill="#d4d4d4"/><circle cx="1576.5" cy="688" r="4.3" fill="#323232"/><circle cx="1578" cy="686.5" r="1" fill="#d4d4d4"/></g>
<g><path d="M1566.5 748.5 C1570.5 740.7 1582.5 740.7 1586.5 748.5 C1582.5 756.3 1570.5 756.3 1566.5 748.5 Z" fill="#d4d4d4"/><circle cx="1576.5" cy="749" r="4.3" fill="#323232"/><circle cx="1578" cy="747.5" r="1" fill="#d4d4d4"/></g>
<g fill="none" stroke="#c8c8c8" stroke-width="1.6"><rect x="1855" y="745" width="14" height="11" rx="1"/><path d="M1858 745 V742 a4 4 0 0 1 8 0 V745"/></g><circle cx="1862" cy="750.5" r="1.5" fill="#c8c8c8"/>
</svg>
<!-- bottom bar -->
<div class="a" style="left:1554px;top:1042px;width:363px;height:36px;background:#323232"></div>
<svg style="left:0;top:0" width="1920" height="1080">
<g fill="none" stroke="#8c8c8c" stroke-width="2"><path d="M1621 1053.5 H1619 a5.3 5.3 0 0 0 0 10.6 H1621 M1626 1053.5 H1628 a5.3 5.3 0 0 1 0 10.6 H1626"/><path d="M1619 1058.8 H1628" stroke-width="2.6"/></g>
<text x="1656" y="1067" font-family="Liberation Serif" font-style="italic" font-size="22" fill="#8c8c8c">fx</text>
<path d="M1673 1069 H1680 L1676.5 1072 Z" fill="#8c8c8c"/>
<path d="M1696 1051 H1715 V1066 H1696 Z M1705.5 1054.5 a4 4 0 1 0 0.01 0 Z" fill="#8c8c8c" fill-rule="evenodd"/>
<path d="M1746 1051 a8 8 0 1 0 0.01 0 Z M1746 1053 a6 6 0 0 0 -4.2 10.2 L1750.2 1054.8 A6 6 0 0 0 1746 1053 Z" fill="#8c8c8c" fill-rule="evenodd"/>
<path d="M1754 1069 H1761 L1757.5 1072 Z" fill="#8c8c8c"/>
<path d="M1777 1052 H1784 L1785.5 1054 H1795 V1067 H1777 Z" fill="#8c8c8c"/>
<g fill="none" stroke="#8c8c8c" stroke-width="1.6"><path d="M1820 1052 H1835 V1066 H1826 L1820 1060 Z M1820 1060 H1826 V1066"/></g>
<g fill="none" stroke="#8c8c8c" stroke-width="1.6"><path d="M1858 1054 H1876 M1864 1054 V1051 H1870 V1054 M1860 1054 V1068 H1874 V1054 M1864 1057 V1065 M1867 1057 V1065 M1870 1057 V1065"/></g>
</svg>
<!-- DIALOG -->
<div class="a" style="left:1152px;top:114px;width:484px;height:510px;background:#323232;box-shadow:0 0 3px rgba(0,0,0,0.3)"></div>
<div class="a" style="left:1152px;top:114px;width:484px;height:44px;background:#ffffff"></div>
<div class="a" id="dt" style="left:1163px;top:114px;height:44px;line-height:43px;font-size:18px;color:#1a1a1a;white-space:nowrap">高斯模糊</div>
<svg style="left:1602px;top:127px" width="18" height="18"><path d="M1 1 L17 17 M17 1 L1 17" stroke="#222" stroke-width="1.4"/></svg>
<div class="a" style="left:1169px;top:175px;width:309px;height:309px;background:#fff;background-image:linear-gradient(45deg,#cccccc 25%,transparent 25%,transparent 75%,#cccccc 75%),linear-gradient(45deg,#cccccc 25%,transparent 25%,transparent 75%,#cccccc 75%);background-size:16px 16px;background-position:0 0,8px 8px;border:1px solid #e8e8e8"></div>
<div class="a" style="left:1503px;top:175px;width:117px;height:37px;border:1.5px solid #d8d8d8;border-radius:19px"></div>
<div class="a" style="left:1503px;top:175px;width:117px;height:37px;line-height:37px;text-align:center;font-size:19.5px;color:#dcdcdc">确定</div>
<div class="a" style="left:1503px;top:226px;width:117px;height:37px;border:1.5px solid #8a8a8a;border-radius:19px"></div>
<div class="a" style="left:1503px;top:226px;width:117px;height:37px;line-height:37px;text-align:center;font-size:19.5px;color:#dcdcdc">取消</div>
<div class="a" style="left:1501px;top:280px;width:18px;height:18px;border-radius:3px;background:#d8d8d8"></div>
<svg style="left:1501px;top:280px" width="18" height="18"><path d="M4 9.3 L7.8 13 L14.2 6" stroke="#2a2a2a" stroke-width="2.8" fill="none"/></svg>
<div class="a" id="pv" style="left:1532px;top:276px;height:26px;line-height:26px;font-size:19px;color:#dcdcdc;white-space:nowrap">预览(P)</div>
<!-- cursor -->
<svg style="left:1576px;top:196px" width="14" height="20"><path d="M1 1 V15 L4.5 11.8 L7 17.5 L9.3 16.5 L6.8 11 H11.5 Z" fill="#fff" stroke="#000" stroke-width="1"/></svg>
<!-- zoom row -->
<svg style="left:1231px;top:497px" width="22" height="22"><circle cx="9" cy="9" r="6.8" stroke="#c8c8c8" stroke-width="1.6" fill="none"/><path d="M14 14 L19.5 19.5" stroke="#c8c8c8" stroke-width="2.6"/><path d="M5.5 9 H12.5" stroke="#c8c8c8" stroke-width="1.6"/></svg>
<div class="a" id="zp" style="left:1299px;top:495px;height:24px;line-height:24px;font-size:18.3px;color:#c4c4c4;white-space:nowrap">100%</div>
<svg style="left:1393px;top:497px" width="22" height="22"><circle cx="9" cy="9" r="6.8" stroke="#c8c8c8" stroke-width="1.6" fill="none"/><path d="M14 14 L19.5 19.5" stroke="#c8c8c8" stroke-width="2.6"/><path d="M5.5 9 H12.5 M9 5.5 V12.5" stroke="#c8c8c8" stroke-width="1.6"/></svg>
<!-- radius row -->
<div class="a" id="rl" style="left:1186px;top:540px;height:26px;line-height:26px;font-size:19.5px;color:#b4b4b4;white-space:nowrap">半径(R):</div>
<div class="a" style="left:1267px;top:537px;width:82px;height:34px;background:#262626;border:1px solid #24508f"></div>
<div class="a" style="left:1272px;top:542px;width:37px;height:23px;background:#1564d4"></div>
<div class="a" id="rv" style="left:1272px;top:541px;height:25px;line-height:25px;font-size:17px;color:#fff;white-space:nowrap">10.0</div>
<div class="a" style="left:1308px;top:542px;width:1px;height:23px;background:#e0e0e0"></div>
<div class="a" id="px" style="left:1366px;top:540px;height:26px;line-height:26px;font-size:19.5px;color:#b4b4b4;white-space:nowrap">像素</div>
<div class="a" style="left:1179px;top:586px;width:288px;height:5px;background:#5a5a5a"></div>
<svg style="left:1284px;top:592px" width="18" height="16"><path d="M9 1.5 C10 1.5 16.5 10 16.5 12.5 C16.5 14.5 15 15 13 15 H5 C3 15 1.5 14.5 1.5 12.5 C1.5 10 8 1.5 9 1.5 Z" fill="#e6e6e6"/></svg>
</body></html>
